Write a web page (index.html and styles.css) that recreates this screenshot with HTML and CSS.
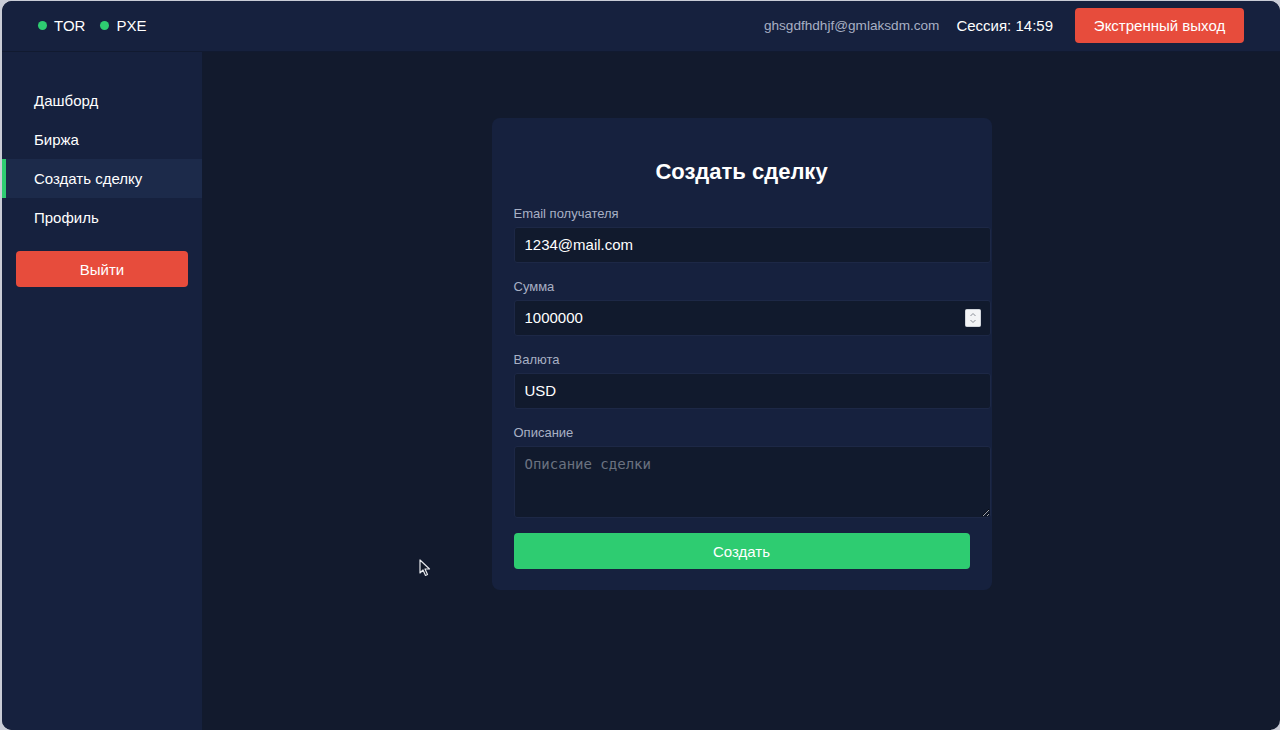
FILE: index.html
```html
<!DOCTYPE html>
<html lang="ru">
<head>
<meta charset="utf-8">
<title>Создать сделку</title>
<link rel="stylesheet" href="styles.css">
</head>
<body>
<div class="app">
  <header class="topbar">
    <div class="status">
      <span class="dot"></span><span class="net">TOR</span>
      <span class="dot"></span><span class="net">PXE</span>
    </div>
    <div class="user">
      <span class="email">ghsgdfhdhjf@gmlaksdm.com</span>
      <span class="session">Сессия: 14:59</span>
      <button class="btn btn-red btn-exit">Экстренный выход</button>
    </div>
  </header>
  <div class="body">
    <aside class="sidebar">
      <nav class="nav">
        <a class="nav-item">Дашборд</a>
        <a class="nav-item">Биржа</a>
        <a class="nav-item active">Создать сделку</a>
        <a class="nav-item">Профиль</a>
      </nav>
      <button class="btn btn-red btn-logout">Выйти</button>
    </aside>
    <main class="main">
      <form class="card">
        <h2 class="title">Создать сделку</h2>
        <label class="label">Email получателя</label>
        <input class="field" type="email" value="1234@mail.com">
        <label class="label">Сумма</label>
        <div class="num-wrap">
          <input class="field" type="text" value="1000000">
          <svg class="spinner" width="16" height="18" viewBox="0 0 16 18">
            <rect x="0.5" y="0.5" width="15" height="17" rx="1" fill="#f3f4f6" stroke="#d1d5db"/>
            <path d="M5.5 7 L8 4.5 L10.5 7" fill="none" stroke="#8b8f98" stroke-width="1"/>
            <path d="M5.5 11 L8 13.5 L10.5 11" fill="none" stroke="#8b8f98" stroke-width="1"/>
          </svg>
        </div>
        <label class="label">Валюта</label>
        <input class="field" type="text" value="USD">
        <label class="label">Описание</label>
        <textarea class="field area" placeholder="Описание сделки"></textarea>
        <button type="button" class="btn btn-green">Создать</button>
      </form>
      <svg class="cursor" width="12" height="18" viewBox="0 0 12 18">
        <path d="M1 1 L1 14 L4 11 L6.5 16.5 L8.5 15.5 L6 10 L10.5 10 Z" fill="#111827" stroke="#e5e7eb" stroke-width="1.2" stroke-linejoin="round"/>
      </svg>
    </main>
  </div>
</div>
</body>
</html>
```

FILE: styles.css
```css
* { box-sizing: border-box; }
html, body { margin: 0; padding: 0; height: 100%; }
body {
  background: #c9ccd6;
  font-family: "Liberation Sans", Arial, sans-serif;
  color: #ffffff;
  overflow: hidden;
}
.app {
  margin: 1px 0 0 2px;
  height: 729px;
  border-radius: 10px;
  overflow: hidden;
  background: #121a2d;
  display: flex;
  flex-direction: column;
}
.topbar {
  height: 51px;
  flex: none;
  background: #16213e;
  border-bottom: 1px solid #111a30;
  display: flex;
  align-items: center;
  justify-content: space-between;
  padding: 0 36px 1px 36px;
}
.status { display: flex; align-items: center; font-size: 15px; }
.dot {
  width: 9px; height: 9px; border-radius: 50%;
  background: #2ecc71;
  margin-right: 7px;
}
.net { margin-right: 15px; }
.user { display: flex; align-items: center; }
.email { color: #a8b0c4; font-size: 13.6px; margin-right: 17px; }
.session { font-size: 15px; margin-right: 22px; }
.btn {
  border: none;
  border-radius: 4px;
  color: #fff;
  font-family: "Liberation Sans", Arial, sans-serif;
  font-size: 15px;
  cursor: pointer;
}
.btn-red { background: #e74c3c; }
.btn-exit { height: 35px; padding: 0 18px; width: 169px; }
.body { flex: 1; display: flex; min-height: 0; }
.sidebar {
  width: 201px;
  flex: none;
  background: #16213e;
  border-right: 1px solid #111a2e;
  padding-top: 29px;
}
.nav { display: flex; flex-direction: column; }
.nav-item {
  height: 39px;
  display: flex;
  align-items: center;
  font-size: 15px;
  color: #ffffff;
  border-left: 4px solid transparent;
  padding-left: 28px;
}
.nav-item.active {
  background: #1c2a4a;
  border-left-color: #2ecc71;
}
.btn-logout {
  display: block;
  margin: 14px 0 0 14px;
  width: 172px;
  height: 36px;
}
.main {
  flex: 1;
  position: relative;
  display: flex;
  justify-content: center;
  align-items: flex-start;
  padding-top: 66px;
}
.card {
  width: 500px;
  background: #16213e;
  border-radius: 8px;
  padding: 22px 22px 21px 22px;
  display: flex;
  flex-direction: column;
  align-items: flex-start;
}
.title {
  align-self: center;
  margin: 19px 0 20px 0;
  font-size: 22px;
  line-height: 26px;
  font-weight: bold;
}
.label {
  font-size: 13px;
  line-height: 18px;
  color: #a8b0c4;
  margin-bottom: 4px;
}
.field {
  box-sizing: content-box;
  width: calc(100% - 1px);
  height: 16px;
  padding: 9px 10px;
  margin: 0 0 15px 0;
  background: #111a2d;
  border: 1px solid #1d2846;
  border-radius: 3px;
  color: #ffffff;
  font-family: "Liberation Sans", Arial, sans-serif;
  font-size: 15px;
  line-height: 16px;
  outline: none;
}
.num-wrap {
  position: relative;
  width: 100%;
  display: flex;
}
.num-wrap .field { width: calc(100% - 1px); flex: none; }
.spinner {
  position: absolute;
  right: -11px;
  top: 9px;
}
.area {
  height: 52px;
  font-family: "DejaVu Sans Mono", monospace;
  font-size: 14px;
  line-height: 16px;
  resize: vertical;
  margin-bottom: 15px;
}
.area::placeholder { color: #6b7280; }
.btn-green {
  width: 100%;
  height: 36px;
  background: #2ecc71;
  margin-top: 0;
}
.cursor {
  position: absolute;
  left: 216px;
  top: 507px;
}
```
